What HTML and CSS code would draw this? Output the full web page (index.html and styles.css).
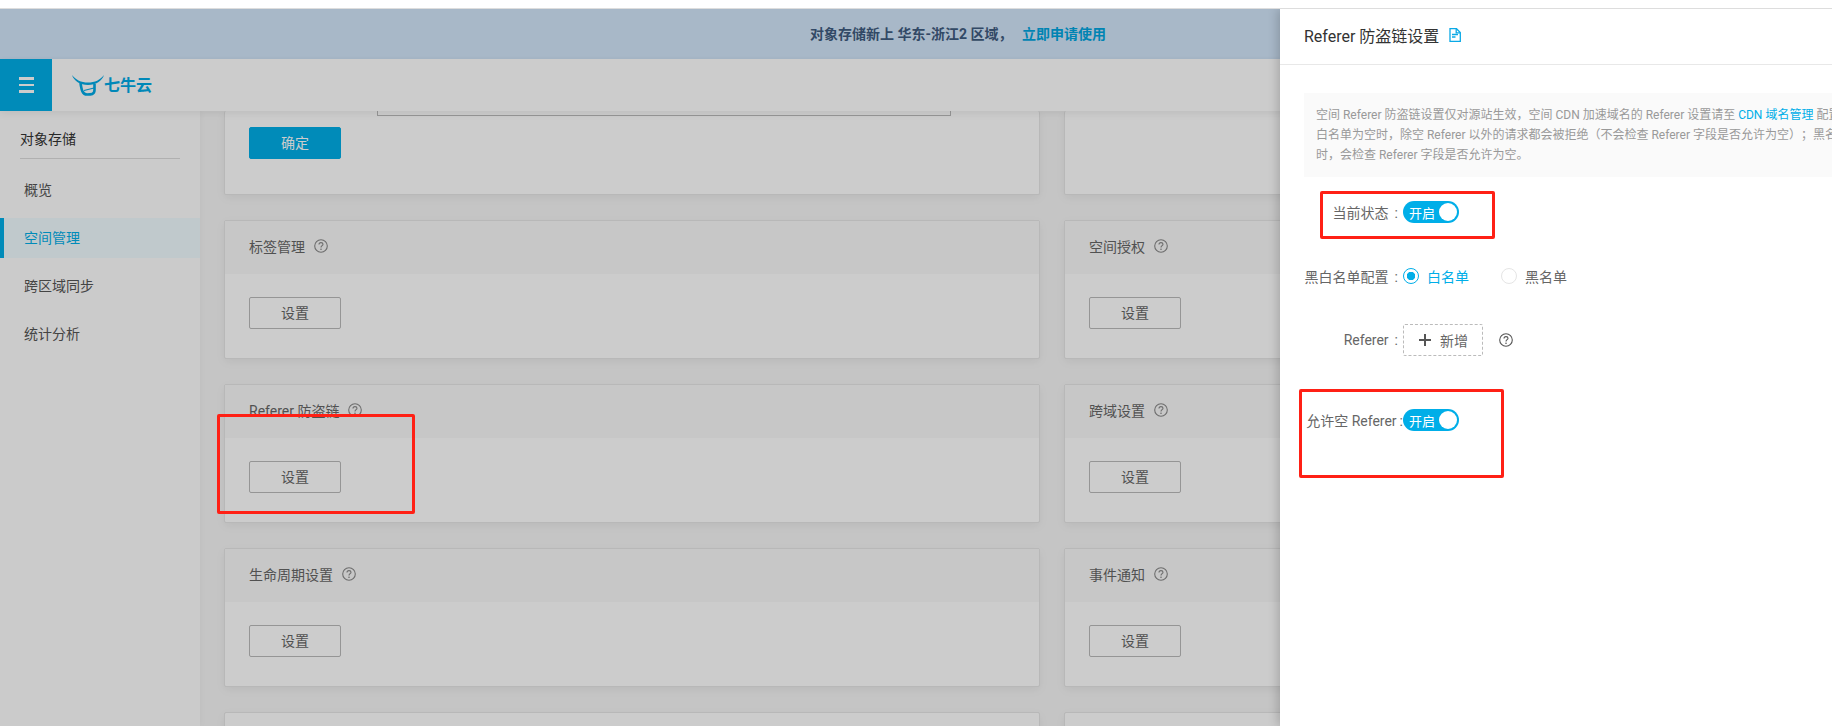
FILE: index.html
```html
<!DOCTYPE html>
<html lang="zh-CN">
  <head>
    <meta charset="UTF-8" />
    <title>Referer 防盗链设置</title>
    <link rel="stylesheet" href="styles.css">
  </head>
  <body>
    <div class="top-strip"></div>
    <div class="app">
      <div class="banner">
        <b>对象存储新上 华东-浙江2 区域，</b>
        <a href="#">立即申请使用</a>
      </div>
      <header class="topbar">
        <div class="menu-btn"><span></span><span></span><span></span></div>
        <div class="logo">
          <svg width="32" height="22" viewBox="0 0 32 22">
            <path d="M0 0C4 5 9 7.500 16 7.500C23 7.500 28 5 32 0C30 6 24 10 16 10C8 10 2 6 0 0Z" fill="#00aae7"/>
            <path d="M8.500 8C9.500 15 10.500 19.500 15 19.500C19 19.500 22.500 19.500 22.500 15L22.500 9" fill="none" stroke="#00aae7" stroke-width="2.600"/>
            <path d="M12 15.500L22 13" fill="none" stroke="#00aae7" stroke-width="1.200"/>
          </svg>
          <span>七牛云</span>
        </div>
      </header>
      <div class="main">
        <nav class="sidebar">
          <div class="side-title">对象存储</div>
          <a class="side-item" href="#">概览</a>
          <a class="side-item active" href="#">空间管理</a>
          <a class="side-item" href="#">跨区域同步</a>
          <a class="side-item" href="#">统计分析</a>
        </nav>
        <div class="content">
          <div class="card card-cut">
            <div class="cut-input"></div>
            <button class="btn btn-primary">确定</button>
          </div>
          <div class="card card-cut"></div>

          <div class="card">
            <div class="card-header">标签管理 <svg class="help"><use href="#help" /></svg></div>
            <div class="card-body"><button class="btn">设置</button></div>
          </div>
          <div class="card">
            <div class="card-header">空间授权 <svg class="help"><use href="#help" /></svg></div>
            <div class="card-body"><button class="btn">设置</button></div>
          </div>

          <div class="card">
            <div class="card-header">Referer 防盗链 <svg class="help"><use href="#help" /></svg></div>
            <div class="card-body"><button class="btn">设置</button></div>
          </div>
          <div class="card">
            <div class="card-header">跨域设置 <svg class="help"><use href="#help" /></svg></div>
            <div class="card-body"><button class="btn">设置</button></div>
          </div>

          <div class="card">
            <div class="card-header">生命周期设置 <svg class="help"><use href="#help" /></svg></div>
            <div class="card-body"><button class="btn">设置</button></div>
          </div>
          <div class="card">
            <div class="card-header">事件通知 <svg class="help"><use href="#help" /></svg></div>
            <div class="card-body"><button class="btn">设置</button></div>
          </div>

          <div class="card"></div>
          <div class="card"></div>
        </div>
      </div>

      <div class="mask"></div>
      <div class="red-box red-left"></div>

      <aside class="panel">
        <div class="panel-header">
          Referer 防盗链设置
          <svg class="doc-icon" width="12" height="14" viewBox="0 0 12 14">
            <path d="M1 .7H7.500L11.300 4.500V13.300H1Z" fill="none" stroke="#0aa9e6" stroke-width="1.300"/>
            <path d="M7.200 1V4.800H11" fill="none" stroke="#0aa9e6" stroke-width="1.300"/>
            <path d="M3 6.500H9M3 9H6.500" stroke="#0aa9e6" stroke-width="1.300"/>
          </svg>
        </div>
        <div class="panel-body">
          <div class="notice">
            空间 Referer 防盗链设置仅对源站生效，空间 CDN 加速域名的 Referer 设置请至 <a href="#">CDN 域名管理</a> 配置。<br />
            白名单为空时，除空 Referer 以外的请求都会被拒绝（不会检查 Referer 字段是否允许为空）；黑名单不为空<br />
            时，会检查 Referer 字段是否允许为空。
          </div>
          <div class="form-row row-status">
            <label>当前状态</label>
            <span class="switch"><span class="switch-text">开启</span><i></i></span>
          </div>
          <div class="form-row row-list">
            <label>黑白名单配置</label>
            <span class="radio checked"></span><span class="radio-text checked">白名单</span>
            <span class="radio"></span><span class="radio-text">黑名单</span>
          </div>
          <div class="form-row row-referer">
            <label>Referer</label>
            <button class="add-btn">
              <svg width="14" height="14" viewBox="0 0 14 14"><path d="M7 1V13M1 7H13" stroke="#555" stroke-width="2"/></svg>
              新增
            </button>
            <svg class="help help-dark"><use href="#help" /></svg>
          </div>
          <div class="form-row row-empty">
            <label>允许空 Referer</label>
            <span class="switch"><span class="switch-text">开启</span><i></i></span>
          </div>
        </div>
      </aside>

      <div class="red-box red-status"></div>
      <div class="red-box red-empty"></div>
    </div>

    <svg width="0" height="0" class="icon-defs">
      <symbol id="help" viewBox="0 0 14 14">
        <circle cx="7" cy="7" r="6.300" fill="none" stroke="currentColor" stroke-width="1.100"/>
        <path d="M5 5.600C5 4.300 5.900 3.600 7 3.600C8.200 3.600 9 4.300 9 5.300C9 6.700 7 6.700 7 8.400" fill="none" stroke="currentColor" stroke-width="1.100"/>
        <circle cx="7" cy="10.200" r=".8" fill="currentColor"/>
      </symbol>
    </svg>
  </body>
</html>
```

FILE: styles.css
```css
* {
  margin: 0;
  padding: 0;
  box-sizing: border-box;
}
body {
  font-family: "Roboto", "Noto Sans CJK SC", sans-serif;
  font-size: 14px;
  color: #666;
  background-color: #fff;
  height: 726px;
  overflow: hidden;
  text-spacing-trim: space-all;
}
a {
  text-decoration: none;
}
button {
  font-family: inherit;
}
.icon-defs {
  position: absolute;
}
.top-strip {
  height: 9px;
  background-color: #fff;
  border-bottom: 1px solid #ddd;
}
.app {
  position: relative;
  height: 717px;
  overflow: hidden;
  background-color: #f7f7f7;
}
.banner {
  height: 50px;
  line-height: 50px;
  padding-left: 810px;
  background-color: #d3e7fb;
  color: #3f5c80;
  white-space: nowrap;
}
.banner b {
  font-weight: 700;
}
.banner a {
  color: #00a5e0;
  margin-left: 6px;
  font-weight: 700;
}
.topbar {
  position: relative;
  z-index: 2;
  display: flex;
  align-items: center;
  height: 52px;
  background-color: #fff;
  box-shadow: 0 2px 8px rgba(0, 0, 0, 0.08);
}
.menu-btn {
  display: flex;
  flex-direction: column;
  justify-content: center;
  gap: 4px;
  align-items: center;
  width: 52px;
  height: 52px;
  background-color: #00aee8;
}
.menu-btn span {
  width: 15px;
  height: 2.500px;
  background-color: #fff;
}
.logo {
  display: flex;
  align-items: center;
  margin-left: 20px;
  margin-top: 1px;
}
.logo span {
  font-size: 16px;
  font-weight: 700;
  color: #00aae7;
  line-height: 22px;
}
.main {
  display: flex;
  height: 615px;
}
.sidebar {
  width: 200px;
  flex-shrink: 0;
  padding-top: 8px;
  background-color: #fefefe;
  box-shadow: 1px 0 6px rgba(0, 0, 0, 0.04);
}
.side-title {
  margin: 0 20px 11px;
  height: 40px;
  line-height: 40px;
  color: #333;
  border-bottom: 1px solid #ddd;
}
.side-item {
  display: block;
  height: 40px;
  line-height: 40px;
  margin-bottom: 8px;
  padding-left: 24px;
  color: #555;
}
.side-item.active {
  color: #00aee8;
  background-color: #f0fcff;
  border-left: 4px solid #00aee8;
  padding-left: 20px;
}
.content {
  display: grid;
  grid-template-columns: 816px 816px;
  grid-template-rows: 84px;
  grid-auto-rows: 139px;
  gap: 25px 24px;
  padding-left: 24px;
  overflow: hidden;
  flex: 1;
}
.card {
  background-color: #fff;
  border: 1px solid #e6e6e6;
  border-radius: 2px;
  box-shadow: 0 3px 10px rgba(0, 0, 0, 0.06);
}
.card-cut {
  border-top: none;
  padding: 0 24px;
}
.cut-input {
  width: 574px;
  height: 5px;
  margin-left: 128px;
  margin-bottom: 11px;
  border: 1px solid #bbb;
  border-top: none;
}
.card-header {
  display: flex;
  align-items: center;
  gap: 4px;
  height: 53px;
  padding: 0 0 3px 24px;
  background-color: #f9f9f9;
}
.card-body {
  padding: 23px 24px;
}
.help {
  width: 14px;
  height: 14px;
  margin-left: 5px;
  color: #888;
}
.help-dark {
  color: #555;
  margin-left: 16px;
}
.btn {
  display: block;
  width: 92px;
  height: 32px;
  padding-bottom: 2px;
  font-size: 14px;
  color: #666;
  background-color: #fff;
  border: 1px solid #bbb;
  border-radius: 2px;
}
.btn-primary {
  color: #fff;
  background-color: #00aee8;
  border-color: #00aee8;
}
.mask {
  position: absolute;
  inset: 0;
  z-index: 3;
  background-color: rgba(0, 0, 0, 0.2);
}
.panel {
  position: absolute;
  top: 0;
  left: 1280px;
  z-index: 4;
  width: 640px;
  height: 100%;
  background-color: #fff;
  box-shadow: -2px 0 10px rgba(0, 0, 0, 0.2);
}
.panel-header {
  display: flex;
  align-items: center;
  gap: 10px;
  height: 56px;
  padding: 0 0 3px 24px;
  font-size: 16px;
  color: #333;
  border-bottom: 1px solid #e8e8e8;
}
.panel-body {
  padding: 28px 24px 0;
}
.notice {
  height: 84px;
  padding: 12px 12px;
  font-size: 12px;
  line-height: 20px;
  color: #999;
  white-space: nowrap;
  background-color: #fafafa;
}
.notice a {
  color: #00aee8;
}
.form-row {
  display: flex;
  align-items: center;
  height: 32px;
}
.form-row label {
  width: 99px;
  text-align: right;
  white-space: nowrap;
  padding-right: 5px;
  flex-shrink: 0;
}
.form-row label::after {
  content: ":";
  margin-left: 6px;
}
.row-status {
  margin-top: 19px;
  margin-bottom: 32px;
}
.row-list {
  margin-bottom: 32px;
}
.row-referer {
  margin-bottom: 48px;
}
.row-empty label {
  padding-right: 0;
}
.row-empty label::after {
  margin-left: 3px;
}
.switch {
  display: flex;
  align-items: center;
  justify-content: space-between;
  width: 56px;
  height: 22px;
  padding: 0 2px 0 6px;
  border-radius: 11px;
  background-color: #00aee8;
  color: #fff;
  font-size: 13px;
}
.switch i {
  width: 18px;
  height: 18px;
  border-radius: 50%;
  background-color: #fff;
}
.radio {
  width: 16px;
  height: 16px;
  border-radius: 50%;
  border: 1px solid #e5e5e5;
  background-color: #fff;
}
.radio.checked {
  border-color: #00aee8;
  background: radial-gradient(circle, #00aee8 0 4px, #fff 4.500px);
}
.radio-text {
  margin: 0 32px 0 8px;
}
.radio-text.checked {
  color: #00aee8;
}
.add-btn {
  display: flex;
  align-items: center;
  justify-content: center;
  gap: 8px;
  width: 80px;
  height: 32px;
  font-size: 14px;
  color: #666;
  background-color: #fff;
  border: 1px dashed #bbb;
  border-radius: 2px;
}
.red-box {
  position: absolute;
  z-index: 5;
  border: 3px solid #ff2015;
  border-radius: 2px;
}
.red-left {
  left: 217px;
  top: 405px;
  width: 198px;
  height: 100px;
}
.red-status {
  left: 1320px;
  top: 182px;
  width: 175px;
  height: 48px;
}
.red-empty {
  left: 1299px;
  top: 380px;
  width: 205px;
  height: 89px;
}
```
